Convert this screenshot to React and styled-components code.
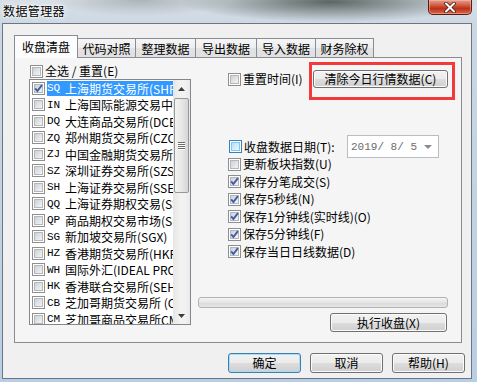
import React from 'react';
import styled, { createGlobalStyle, css } from 'styled-components';

const FONT = `"Noto Sans CJK SC", "Liberation Sans", sans-serif`;
const MONO = `"Liberation Mono", "Noto Sans CJK SC", monospace`;

const GlobalStyle = createGlobalStyle`
  html, body {
    margin: 0;
    padding: 0;
  }
  body {
    width: 477px;
    height: 382px;
    overflow: hidden;
    background: #c4d4e6;
  }
`;

const exchanges = [
  ['SQ', '上海期货交易所(SHFE)', true],
  ['IN', '上海国际能源交易中心(INE)'],
  ['DQ', '大连商品交易所(DCE)'],
  ['ZQ', '郑州期货交易所(CZCE)'],
  ['ZJ', '中国金融期货交易所(CFFEX)'],
  ['SZ', '深圳证券交易所(SZSE)'],
  ['SH', '上海证券交易所(SSE)'],
  ['QQ', '上海证券期权交易(SSE)'],
  ['QP', '商品期权交易市场(SHFE)'],
  ['SG', '新加坡交易所(SGX)'],
  ['HZ', '香港期货交易所(HKFE)'],
  ['WH', '国际外汇(IDEAL PRO)'],
  ['HK', '香港联合交易所(SEHK)'],
  ['CB', '芝加哥期货交易所 (CBOT)'],
  ['CM', '芝加哥商品交易所CME'],
];

const options = [
  ['更新板块指数(U)', false],
  ['保存分笔成交(S)', true],
  ['保存5秒线(N)', true],
  ['保存1分钟线(实时线)(O)', true],
  ['保存5分钟线(F)', true],
  ['保存当日日线数据(D)', true],
];

const tabs = [
  ['收盘清盘', 64],
  ['代码对照', 58],
  ['整理数据', 60],
  ['导出数据', 61],
  ['导入数据', 59],
  ['财务除权', 58],
];

const Window = styled.div`
  width: 477px;
  height: 382px;
  box-sizing: border-box;
  display: flex;
  flex-direction: column;
  padding: 0 5px 3px 2px;
  font-family: ${FONT};
  font-size: 12px;
  color: #000;
  background:
    radial-gradient(ellipse 150px 20px at 330px 2px, rgba(60, 72, 68, 0.8), rgba(60, 72, 68, 0) 100%),
    radial-gradient(ellipse 90px 16px at 140px 0px, rgba(90, 100, 100, 0.35), rgba(90, 100, 100, 0) 100%),
    linear-gradient(to bottom, #d9e0e6 0px, #cbd7e3 26px, #b9cee4 100%);
`;

const TitleBar = styled.div`
  height: 23px;
  display: flex;
  align-items: flex-start;
  justify-content: space-between;
`;

const Title = styled.div`
  margin: 3px 0 0 1px;
  font-size: 12px;
  line-height: 15px;
  letter-spacing: 0.4px;
  text-shadow: 0 0 6px #fff, 0 0 3px #fff, 0 0 2px #fff;
`;

const CloseButton = styled.div`
  width: 44px;
  height: 15px;
  box-sizing: border-box;
  display: flex;
  align-items: center;
  justify-content: center;
  border: 1px solid #5c1c14;
  border-top: none;
  border-radius: 0 0 5px 5px;
  background: linear-gradient(to bottom, #e2a08e 0%, #d0583f 40%, #bd2f18 60%, #d66a4c 100%);
  box-shadow: inset 0 0 0 1px rgba(255, 200, 180, 0.45);
`;

const Client = styled.div`
  flex: 1;
  display: flex;
  flex-direction: column;
  border: 1px solid #6b7682;
  background: #f0f0f0;
  padding: 11px 9px 0 11px;
`;

const TabStrip = styled.div`
  display: flex;
  align-items: flex-end;
  height: 22px;
  position: relative;
  z-index: 1;
`;

const Tab = styled.div`
  box-sizing: border-box;
  display: flex;
  align-items: center;
  justify-content: center;
  border: 1px solid #898c95;
  border-bottom: none;
  white-space: nowrap;
  ${(p) =>
    p.$active
      ? css`
          height: 23px;
          margin-bottom: -1px;
          background: #fcfcfc;
          padding-bottom: 2px;
        `
      : css`
          height: 19px;
          border-left: none;
          background: linear-gradient(to bottom, #f6f6f6 0%, #ededed 50%, #e3e3e3 51%, #e0e0e0 100%);
        `}
`;

const Panel = styled.div`
  height: 286px;
  box-sizing: border-box;
  border: 1px solid #898c95;
  background: #f5f5f5;
  display: flex;
`;

const LeftCol = styled.div`
  margin-left: 14px;
  display: flex;
  flex-direction: column;
`;

const CheckRow = styled.label`
  display: flex;
  align-items: center;
  height: ${(p) => p.$h || 17.5}px;
  padding-left: ${(p) => p.$indent || 0}px;
  margin-top: ${(p) => p.$top || 0}px;
  white-space: nowrap;
`;

const RowText = styled.span`
  margin-left: 2px;
  line-height: 14px;
`;

const Box = styled.span`
  position: relative;
  flex: none;
  width: 13px;
  height: 13px;
  box-sizing: border-box;
  border: 1px solid ${(p) => (p.$hot ? '#3c7fb1' : '#8e8f8f')};
  background: #fff;
  &::before {
    content: '';
    position: absolute;
    inset: 1px;
    border: 1px solid ${(p) => (p.$hot ? '#79c6f9' : '#b4b8bd')};
    background: ${(p) =>
      p.$hot
        ? 'linear-gradient(135deg, #b9dff6, #eaf6fd)'
        : 'linear-gradient(135deg, #cdd1d6, #f4f4f4)'};
  }
  svg {
    position: absolute;
    left: 0;
    top: 0;
  }
`;

const Checkbox = ({ checked, hot }) => (
  <Box $hot={hot}>
    {checked && (
      <svg width="11" height="11" viewBox="0 0 11 11">
        <path d="M2.2 5.4 L4.4 8 L8.9 2.2" fill="none" stroke="#3f5ca6" strokeWidth="1.9" />
      </svg>
    )}
  </Box>
);

const List = styled.div`
  width: 162px;
  height: 246px;
  box-sizing: border-box;
  border: 1px solid #828790;
  background: #fff;
  display: flex;
`;

const Items = styled.div`
  flex: 1;
  min-width: 0;
  overflow: hidden;
  padding-left: 2px;
`;

const Item = styled.div`
  height: 16.5px;
  display: flex;
  align-items: center;
`;

const ItemLabel = styled.div`
  flex: 1;
  min-width: 0;
  margin-left: 2px;
  height: 15px;
  display: flex;
  align-items: center;
  white-space: nowrap;
  overflow: hidden;
  ${(p) =>
    p.$selected &&
    css`
      background: #3399ff;
      color: #fff;
    `}
`;

const Code = styled.span`
  flex: none;
  width: 18px;
  font-family: ${MONO};
  font-size: 11px;
`;

const ScrollBar = styled.div`
  width: 17px;
  flex: none;
  display: flex;
  flex-direction: column;
  align-items: center;
  background: linear-gradient(to right, #e6e6e6, #f2f2f2 40%, #f2f2f2 70%, #e9e9e9);
`;

const Arrow = styled.div`
  height: 17px;
  display: flex;
  align-items: center;
  justify-content: center;
  margin-top: ${(p) => (p.$down ? 'auto' : '0')};
`;

const Thumb = styled.div`
  width: 15px;
  height: 95px;
  margin-top: 1px;
  box-sizing: border-box;
  border: 1px solid #979797;
  border-radius: 2px;
  background: linear-gradient(to right, #f3f3f3, #e8e8e8 50%, #d6d6d6);
  display: flex;
  flex-direction: column;
  align-items: center;
  justify-content: center;
  gap: 1px;
`;

const Grip = styled.span`
  width: 7px;
  height: 1px;
  background: #6b6b6b;
  box-shadow: 0 1px 0 #fff;
`;

const RightCol = styled.div`
  flex: 1;
  margin-left: 7px;
  padding-right: 13px;
  display: flex;
  flex-direction: column;
`;

const TopRow = styled.div`
  display: flex;
  align-items: center;
  margin-top: 12px;
  height: 18px;
`;

const ButtonWrap = styled.div`
  position: relative;
  margin-left: auto;
`;

const RedMark = styled.div`
  position: absolute;
  left: -4px;
  top: -8px;
  width: 146px;
  height: 38px;
  box-sizing: border-box;
  border: 3px solid #f23a3a;
  pointer-events: none;
`;

const Button = styled.button`
  width: ${(p) => p.$w || 73}px;
  height: ${(p) => p.$h || 20}px;
  padding: 0;
  box-sizing: border-box;
  font-family: ${FONT};
  font-size: 12px;
  line-height: 14px;
  color: #000;
  border-radius: 3px;
  border: 1px solid ${(p) => (p.$default ? '#3c7fb1' : '#707070')};
  background: linear-gradient(to bottom, #f2f2f2 0%, #ebebeb 50%, #dddddd 51%, #cfcfcf 100%);
  box-shadow: inset 0 0 0 1px ${(p) => (p.$default ? '#a6dcf6' : '#fbfbfb')};
  white-space: nowrap;
`;

const DateRow = styled(CheckRow)`
  margin-top: 49.5px;
  height: 18px;
`;

const DateBox = styled.div`
  margin-left: auto;
  margin-right: 9px;
  width: 92px;
  height: 23px;
  flex: none;
  box-sizing: border-box;
  border: 1px solid #b9bcc2;
  background: #fff;
  color: #6d6d6d;
  display: flex;
  align-items: center;
  padding-left: 3px;
  font-family: ${MONO};
  font-size: 11px;
  white-space: pre;
`;

const DropArrow = styled.span`
  margin-left: auto;
  margin-right: 6px;
  width: 0;
  height: 0;
  border-left: 4px solid transparent;
  border-right: 4px solid transparent;
  border-top: 4px solid #8a8a8a;
`;

const Progress = styled.div`
  margin-top: 36.5px;
  height: 11px;
  box-sizing: border-box;
  border: 1px solid #b2b2b2;
  border-radius: 3px;
  background: linear-gradient(to bottom, #f4f4f4 0%, #e4e4e4 50%, #d9d9d9 51%, #e6e6e6 100%);
`;

const ExecButton = styled(Button)`
  align-self: flex-end;
  margin-top: 5px;
  margin-right: 1px;
`;

const BottomRow = styled.div`
  display: flex;
  justify-content: flex-end;
  gap: 9px;
  margin-top: 10px;
  margin-right: -3px;
`;

export default function App() {
  return (
    <>
      <GlobalStyle />
      <Window>
        <TitleBar>
          <Title>数据管理器</Title>
          <CloseButton>
            <svg width="14" height="11" viewBox="0 0 14 11">
              <path d="M3 1.5 L11 9.5 M11 1.5 L3 9.5" stroke="#4a1a12" strokeWidth="3.6" strokeLinecap="round" />
              <path d="M3 1.5 L11 9.5 M11 1.5 L3 9.5" stroke="#fff" strokeWidth="2" strokeLinecap="round" />
            </svg>
          </CloseButton>
        </TitleBar>
        <Client>
          <TabStrip>
            {tabs.map(([name, w], i) => (
              <Tab key={name} $active={i === 0} style={{ width: w }}>
                {name}
              </Tab>
            ))}
          </TabStrip>
          <Panel>
            <LeftCol>
              <CheckRow $h={16} $top={5} $indent={1}>
                <Checkbox />
                <RowText>全选 / 重置(E)</RowText>
              </CheckRow>
              <List>
                <Items>
                  {exchanges.map(([code, name, sel]) => (
                    <Item key={code}>
                      <Checkbox checked={sel} />
                      <ItemLabel $selected={sel}>
                        <Code>{code}</Code>
                        {name}
                      </ItemLabel>
                    </Item>
                  ))}
                </Items>
                <ScrollBar>
                  <Arrow>
                    <svg width="7" height="4" viewBox="0 0 7 4">
                      <path d="M0 4 L3.5 0 L7 4 Z" fill="#3c3c3c" />
                    </svg>
                  </Arrow>
                  <Thumb>
                    <Grip />
                    <Grip />
                    <Grip />
                    <Grip />
                  </Thumb>
                  <Arrow $down>
                    <svg width="7" height="4" viewBox="0 0 7 4">
                      <path d="M0 0 L3.5 4 L7 0 Z" fill="#3c3c3c" />
                    </svg>
                  </Arrow>
                </ScrollBar>
              </List>
            </LeftCol>
            <RightCol>
              <TopRow>
                <CheckRow $indent={30}>
                  <Checkbox />
                  <RowText>重置时间(I)</RowText>
                </CheckRow>
                <ButtonWrap>
                  <Button $w={135} $h={18}>清除今日行情数据(C)</Button>
                  <RedMark />
                </ButtonWrap>
              </TopRow>
              <DateRow $indent={31}>
                <Checkbox hot />
                <RowText>收盘数据日期(T):</RowText>
                <DateBox>
                  2019/ 8/ 5
                  <DropArrow />
                </DateBox>
              </DateRow>
              {options.map(([label, on]) => (
                <CheckRow key={label} $indent={30}>
                  <Checkbox checked={on} />
                  <RowText>{label}</RowText>
                </CheckRow>
              ))}
              <Progress />
              <ExecButton $w={117} $h={19}>执行收盘(X)</ExecButton>
            </RightCol>
          </Panel>
          <BottomRow>
            <Button $default>确定</Button>
            <Button>取消</Button>
            <Button>帮助(H)</Button>
          </BottomRow>
        </Client>
      </Window>
    </>
  );
}
